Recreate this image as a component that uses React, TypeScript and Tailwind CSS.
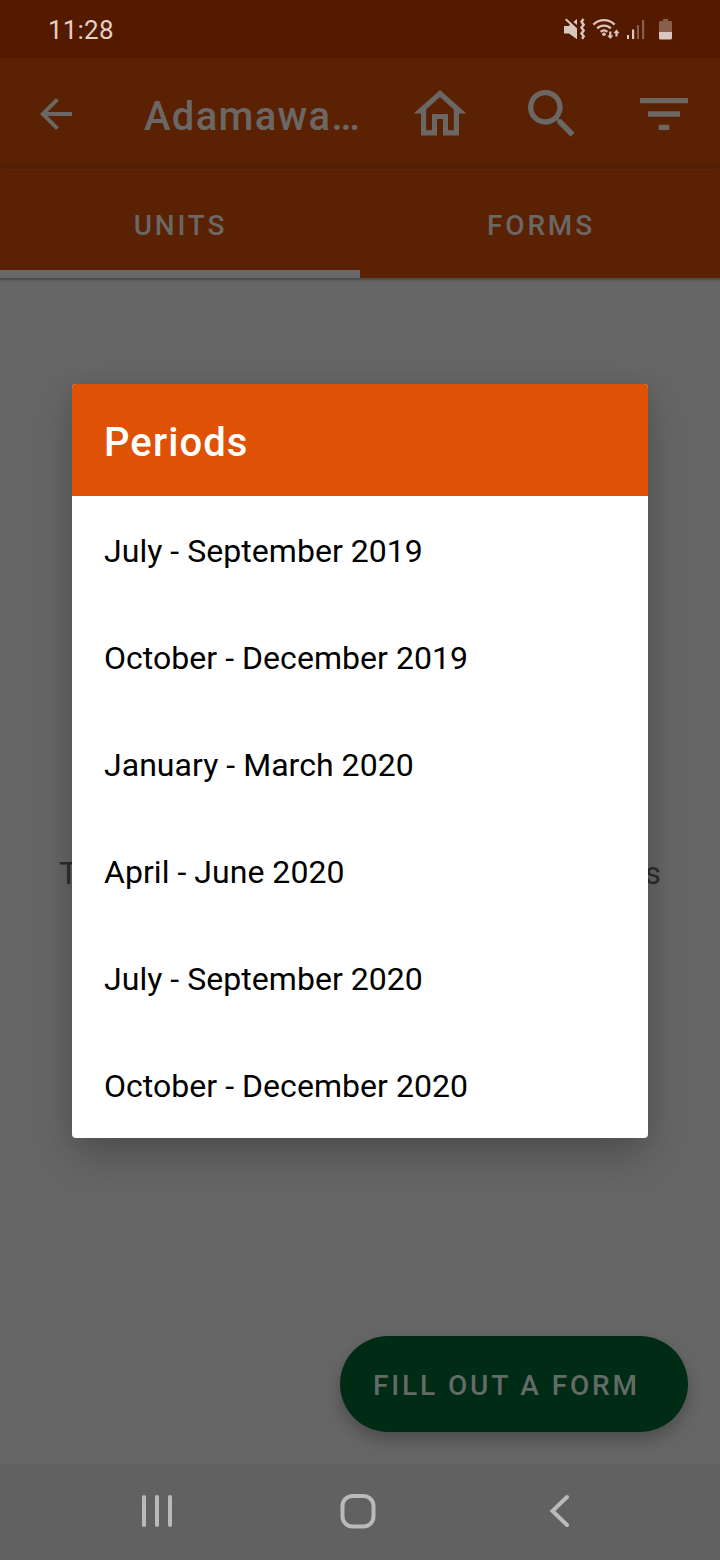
import React from "react";

const periods = [
  "July - September 2019",
  "October - December 2019",
  "January - March 2020",
  "April - June 2020",
  "July - September 2020",
  "October - December 2020",
];

function StatusIcons() {
  return (
    <svg width="120" height="30" viewBox="560 14 120 30" fill="#d8c6bf">
      <path d="M564 26h5l1-1.500-5-4.500 1.400-1.500L577 28.300V39.300L569 33.500h-5z" />
      <path d="M573.300 21.900l3.700-3v6.200z" />
      <path d="M583.500 19l-2 2.700 2.200 3-2.200 2.900 2.200 3-2.200 2.900 2.200 2.800-1.600 2.500" fill="none" stroke="#d8c6bf" strokeWidth="2.400" />
      <g fill="none" stroke="#d8c6bf" strokeWidth="2.300">
        <path d="M593.400 24.600a15 15 0 0 1 21.200 0" />
        <path d="M597.200 28.400a9.600 9.600 0 0 1 13.600 0" />
        <path d="M600.700 31.800a4.800 4.800 0 0 1 6.600 0" />
      </g>
      <circle cx="604" cy="34.200" r="1.800" />
      <path d="M609.200 31.500h2.200v4h2l-3.100 3.500-3.100-3.500h2zM615.400 36.500h2.200v-3.300h2l-3.100-3.600-3.100 3.600h2z" />
      <rect x="627" y="35" width="2" height="4" />
      <rect x="632" y="29.500" width="2.200" height="9.500" />
      <rect x="637" y="25" width="2" height="14" opacity=".4" />
      <rect x="642" y="20" width="2.200" height="19" opacity=".4" />
      <path d="M663 19h5v2h2.600q1.400 0 1.400 1.400V32h-13v-9.600q0-1.400 1.400-1.400h2.600z" opacity=".4" />
      <path d="M659 32h13v6q0 1.500-1.500 1.500h-10Q659 39.500 659 38z" />
    </svg>
  );
}

function BackIcon() {
  return (
    <svg width="48" height="48" viewBox="0 0 24 24" fill="currentColor">
      <path d="M20 11H7.83l5.59-5.59L12 4l-8 8 8 8 1.41-1.41L7.83 13H20v-2z" />
    </svg>
  );
}

function HomeIcon() {
  return (
    <svg width="64" height="64" viewBox="408 82 64 64" fill="currentColor" fillRule="evenodd">
      <path d="M440 90l26.4 23.5H459v21.9h-16V119h-6v16.4h-16v-21.9h-7.4zM440 97l-13.9 12.4v20.8h5.9V114h16v16.2h5.8v-20.8z" />
    </svg>
  );
}

function SearchIcon() {
  return (
    <svg width="64" height="64" viewBox="0 0 24 24" fill="currentColor">
      <path d="M15.5 14h-.79l-.28-.27A6.471 6.471 0 0 0 16 9.5 6.5 6.5 0 1 0 9.5 16c1.61 0 3.09-.59 4.23-1.57l.27.28v.79l5 4.99L20.49 19l-4.99-5zm-6 0C7.01 14 5 11.99 5 9.5S7.01 5 9.5 5 14 7.01 14 9.5 11.99 14 9.5 14z" />
    </svg>
  );
}

function FilterIcon() {
  return (
    <svg width="64" height="64" viewBox="0 0 24 24" fill="currentColor">
      <path d="M10 18h4v-2h-4v2zM3 6v2h18V6H3zm3 7h12v-2H6v2z" />
    </svg>
  );
}

export default function App() {
  return (
    <div className="relative flex h-[1560px] w-[720px] flex-col overflow-hidden bg-[#666666] font-['Roboto',sans-serif] text-[#6a6765]">
      <div className="flex h-[58px] shrink-0 items-start justify-between bg-[#541a00] pl-12 pr-10 pt-[14px] text-[#e3cfc6]">
        <span className="text-[26px] leading-8 tracking-[0.2px]">11:28</span>
        <StatusIcons />
      </div>
      <header className="flex h-[112px] shrink-0 items-center bg-linear-to-b from-[#5b2103] from-90% to-[#521d02] pl-8">
        <BackIcon />
        <h1 className="ml-16 mt-1.5 w-[264px] text-[40px] font-medium leading-[48px] tracking-[1.3px]">Adamawa…</h1>
        <HomeIcon />
        <div className="ml-12">
          <SearchIcon />
        </div>
        <div className="ml-12">
          <FilterIcon />
        </div>
      </header>
      <nav className="z-0 grid h-[108px] shrink-0 grid-cols-2 bg-[#5b2103] text-center text-[28px] font-medium tracking-[2.8px] shadow-[0_1px_2px_1px_#484848]">
        <div className="border-b-8 border-[#686868] pt-[35px] pl-px leading-[42px]">UNITS</div>
        <div className="pt-[35px] pl-0.5 leading-[42px]">FORMS</div>
      </nav>
      <main className="flex grow flex-col justify-between">
        <div className="mt-[574px] flex justify-between px-[59px] text-[32px] leading-[42px] text-[#2d2d2d]">
          <span>T</span>
          <span>s</span>
        </div>
        <button className="mb-8 mr-8 h-24 w-[348px] self-end rounded-full bg-[#002b15] pl-[33px] pt-[3px] text-left text-[28px] font-medium tracking-[2.87px] text-[#626b66] shadow-[0_8px_16px_#00000040]">
          FILL OUT A FORM
        </button>
      </main>
      <footer className="h-24 shrink-0 bg-[#616161]">
        <svg width="720" height="96" viewBox="0 1464 720 96" fill="none" stroke="#bababa" strokeWidth="4" strokeLinecap="round">
          <path d="M144 1497v28M157 1497v28M170 1497v28M567 1497l-14.5 14 14.5 14" />
          <rect x="342.500" y="1496" width="31" height="30.500" rx="10" />
        </svg>
      </footer>

      <section role="dialog" className="absolute left-[72px] top-[384px] h-[754px] w-[576px] overflow-hidden rounded-[4px] bg-white text-black shadow-[0_18px_40px_#00000038,0_0_20px_#00000010]">
        <h2 className="h-28 bg-[#df5206] pl-8 pt-[35px] text-[40px] font-medium leading-[48px] tracking-[1.1px] text-white">Periods</h2>
        <ul className="pt-px">
          {periods.map((period) => (
            <li key={period} className="flex h-[107px] items-center pl-8 text-[32px] tracking-[0.04px]">
              {period}
            </li>
          ))}
        </ul>
      </section>
    </div>
  );
}
